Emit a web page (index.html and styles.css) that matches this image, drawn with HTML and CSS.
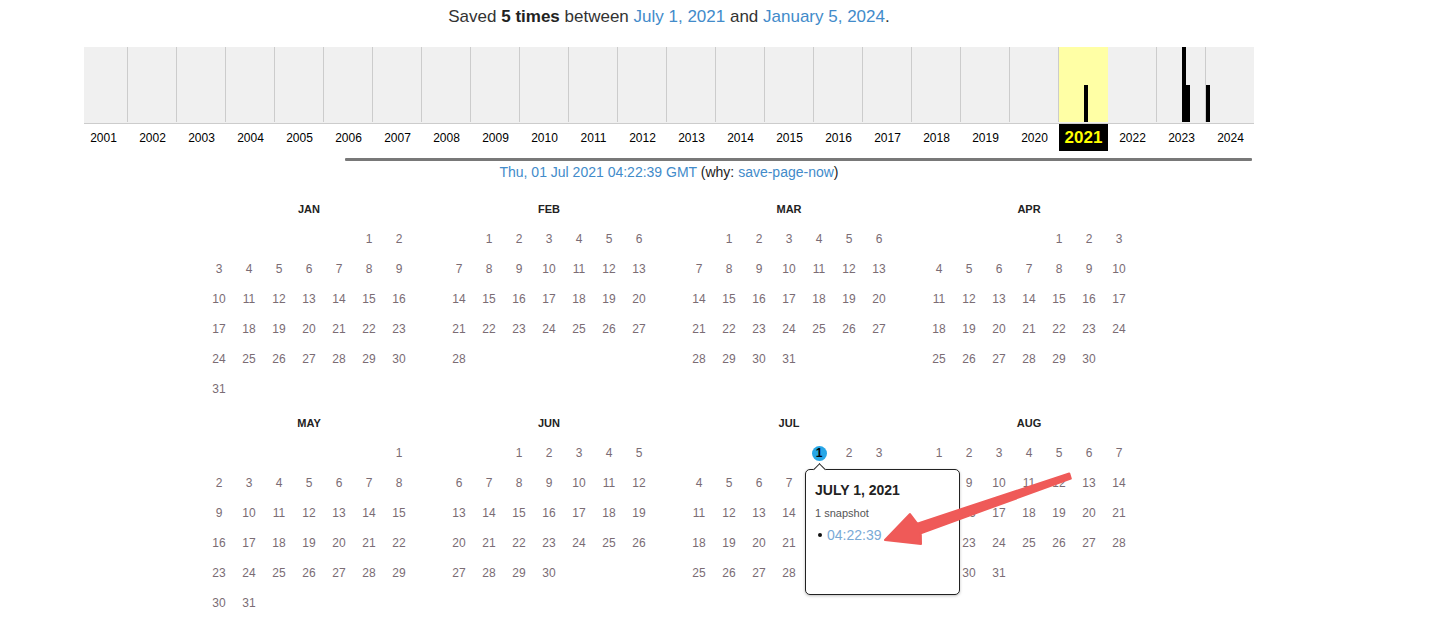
FILE: index.html
```html
<!DOCTYPE html>
<html>
<head>
<meta charset="utf-8">
<title>Wayback calendar</title>
<link rel="stylesheet" href="styles.css">
</head>
<body>
<div class="wrap">
  <div class="summary">Saved <b>5 times</b> between <a href="#">July 1, 2021</a> and <a href="#">January 5, 2024</a>.</div>

  <div class="graph">
    <div class="cols">
      <div class="col"></div><div class="col"></div><div class="col"></div><div class="col"></div>
      <div class="col"></div><div class="col"></div><div class="col"></div><div class="col"></div>
      <div class="col"></div><div class="col"></div><div class="col"></div><div class="col"></div>
      <div class="col"></div><div class="col"></div><div class="col"></div><div class="col"></div>
      <div class="col"></div><div class="col"></div><div class="col"></div><div class="col"></div>
      <div class="col current"><span class="bar" style="left:24.5px;height:37px"></span></div>
      <div class="col"></div>
      <div class="col"><span class="bar" style="left:24.5px;height:75px"></span><span class="bar" style="left:28.6px;height:37px"></span></div>
      <div class="col"><span class="bar" style="left:0px;height:37px"></span></div>
    </div>
  </div>
  <div class="labels">
    <span class="yl">2001</span><span class="yl">2002</span><span class="yl">2003</span><span class="yl">2004</span>
    <span class="yl">2005</span><span class="yl">2006</span><span class="yl">2007</span><span class="yl">2008</span>
    <span class="yl">2009</span><span class="yl">2010</span><span class="yl">2011</span><span class="yl">2012</span>
    <span class="yl">2013</span><span class="yl">2014</span><span class="yl">2015</span><span class="yl">2016</span>
    <span class="yl">2017</span><span class="yl">2018</span><span class="yl">2019</span><span class="yl">2020</span>
    <span class="yl sel">2021</span><span class="yl">2022</span><span class="yl">2023</span><span class="yl">2024</span>
  </div>
  <div class="scroller"></div>
  <div class="capture"><a href="#">Thu, 01 Jul 2021 04:22:39 GMT</a> (why: <a href="#">save-page-now</a>)</div>

  <div class="calendar">
    <div class="month">
      <div class="mtitle">JAN</div>
      <div class="days">
        <span class="day c6">1</span><span class="day">2</span><span class="day">3</span><span class="day">4</span><span class="day">5</span><span class="day">6</span><span class="day">7</span><span class="day">8</span><span class="day">9</span><span class="day">10</span><span class="day">11</span><span class="day">12</span><span class="day">13</span><span class="day">14</span><span class="day">15</span><span class="day">16</span><span class="day">17</span><span class="day">18</span><span class="day">19</span><span class="day">20</span><span class="day">21</span><span class="day">22</span><span class="day">23</span><span class="day">24</span><span class="day">25</span><span class="day">26</span><span class="day">27</span><span class="day">28</span><span class="day">29</span><span class="day">30</span><span class="day">31</span>
      </div>
    </div>
    <div class="month">
      <div class="mtitle">FEB</div>
      <div class="days">
        <span class="day c2">1</span><span class="day">2</span><span class="day">3</span><span class="day">4</span><span class="day">5</span><span class="day">6</span><span class="day">7</span><span class="day">8</span><span class="day">9</span><span class="day">10</span><span class="day">11</span><span class="day">12</span><span class="day">13</span><span class="day">14</span><span class="day">15</span><span class="day">16</span><span class="day">17</span><span class="day">18</span><span class="day">19</span><span class="day">20</span><span class="day">21</span><span class="day">22</span><span class="day">23</span><span class="day">24</span><span class="day">25</span><span class="day">26</span><span class="day">27</span><span class="day">28</span>
      </div>
    </div>
    <div class="month">
      <div class="mtitle">MAR</div>
      <div class="days">
        <span class="day c2">1</span><span class="day">2</span><span class="day">3</span><span class="day">4</span><span class="day">5</span><span class="day">6</span><span class="day">7</span><span class="day">8</span><span class="day">9</span><span class="day">10</span><span class="day">11</span><span class="day">12</span><span class="day">13</span><span class="day">14</span><span class="day">15</span><span class="day">16</span><span class="day">17</span><span class="day">18</span><span class="day">19</span><span class="day">20</span><span class="day">21</span><span class="day">22</span><span class="day">23</span><span class="day">24</span><span class="day">25</span><span class="day">26</span><span class="day">27</span><span class="day">28</span><span class="day">29</span><span class="day">30</span><span class="day">31</span>
      </div>
    </div>
    <div class="month">
      <div class="mtitle">APR</div>
      <div class="days">
        <span class="day c5">1</span><span class="day">2</span><span class="day">3</span><span class="day">4</span><span class="day">5</span><span class="day">6</span><span class="day">7</span><span class="day">8</span><span class="day">9</span><span class="day">10</span><span class="day">11</span><span class="day">12</span><span class="day">13</span><span class="day">14</span><span class="day">15</span><span class="day">16</span><span class="day">17</span><span class="day">18</span><span class="day">19</span><span class="day">20</span><span class="day">21</span><span class="day">22</span><span class="day">23</span><span class="day">24</span><span class="day">25</span><span class="day">26</span><span class="day">27</span><span class="day">28</span><span class="day">29</span><span class="day">30</span>
      </div>
    </div>
    <div class="month">
      <div class="mtitle">MAY</div>
      <div class="days">
        <span class="day c7">1</span><span class="day">2</span><span class="day">3</span><span class="day">4</span><span class="day">5</span><span class="day">6</span><span class="day">7</span><span class="day">8</span><span class="day">9</span><span class="day">10</span><span class="day">11</span><span class="day">12</span><span class="day">13</span><span class="day">14</span><span class="day">15</span><span class="day">16</span><span class="day">17</span><span class="day">18</span><span class="day">19</span><span class="day">20</span><span class="day">21</span><span class="day">22</span><span class="day">23</span><span class="day">24</span><span class="day">25</span><span class="day">26</span><span class="day">27</span><span class="day">28</span><span class="day">29</span><span class="day">30</span><span class="day">31</span>
      </div>
    </div>
    <div class="month">
      <div class="mtitle">JUN</div>
      <div class="days">
        <span class="day c3">1</span><span class="day">2</span><span class="day">3</span><span class="day">4</span><span class="day">5</span><span class="day">6</span><span class="day">7</span><span class="day">8</span><span class="day">9</span><span class="day">10</span><span class="day">11</span><span class="day">12</span><span class="day">13</span><span class="day">14</span><span class="day">15</span><span class="day">16</span><span class="day">17</span><span class="day">18</span><span class="day">19</span><span class="day">20</span><span class="day">21</span><span class="day">22</span><span class="day">23</span><span class="day">24</span><span class="day">25</span><span class="day">26</span><span class="day">27</span><span class="day">28</span><span class="day">29</span><span class="day">30</span>
      </div>
    </div>
    <div class="month">
      <div class="mtitle">JUL</div>
      <div class="days">
        <span class="day c5 snap"><span class="dot">1</span>
          <div class="popup">
            <span class="caret"></span>
            <div class="ptitle">JULY 1, 2021</div>
            <div class="pcount">1 snapshot</div>
            <div class="pitem"><span class="bullet"></span><a href="#">04:22:39</a></div>
          </div>
        </span><span class="day">2</span><span class="day">3</span><span class="day">4</span><span class="day">5</span><span class="day">6</span><span class="day">7</span><span class="day">8</span><span class="day">9</span><span class="day">10</span><span class="day">11</span><span class="day">12</span><span class="day">13</span><span class="day">14</span><span class="day">15</span><span class="day">16</span><span class="day">17</span><span class="day">18</span><span class="day">19</span><span class="day">20</span><span class="day">21</span><span class="day">22</span><span class="day">23</span><span class="day">24</span><span class="day">25</span><span class="day">26</span><span class="day">27</span><span class="day">28</span><span class="day">29</span><span class="day">30</span><span class="day">31</span>
      </div>
    </div>
    <div class="month">
      <div class="mtitle">AUG</div>
      <div class="days">
        <span class="day">1</span><span class="day">2</span><span class="day">3</span><span class="day">4</span><span class="day">5</span><span class="day">6</span><span class="day">7</span><span class="day">8</span><span class="day">9</span><span class="day">10</span><span class="day">11</span><span class="day">12</span><span class="day">13</span><span class="day">14</span><span class="day">15</span><span class="day">16</span><span class="day">17</span><span class="day">18</span><span class="day">19</span><span class="day">20</span><span class="day">21</span><span class="day">22</span><span class="day">23</span><span class="day">24</span><span class="day">25</span><span class="day">26</span><span class="day">27</span><span class="day">28</span><span class="day">29</span><span class="day">30</span><span class="day">31</span>
      </div>
    </div>
  </div>
</div>

<svg class="annot" width="1447" height="629" viewBox="0 0 1447 629">
  <polygon points="1069.2,473.4 917.2,523.6 910,514 885,540 921,544 920.8,533.2 1070.8,478.6" fill="#ef5a58" stroke="#ef5a58" stroke-width="2" stroke-linejoin="round"/>
</svg>
</body>
</html>
```
FILE: styles.css
```css
html, body {
  margin: 0;
  padding: 0;
  background: #fff;
  overflow: hidden;
}
body {
  font-family: "Liberation Sans", Arial, sans-serif;
  color: #333;
  position: relative;
  height: 629px;
}
a {
  color: #428bca;
  text-decoration: none;
}
.wrap {
  width: 1170px;
  margin-left: 84px;
}
.summary {
  margin-top: 7px;
  height: 20px;
  line-height: 20px;
  font-size: 17px;
  text-align: center;
  color: #333;
}
.summary b {
  color: #222;
}
.graph {
  margin-top: 20px;
  height: 76px;
  background: #f0f0f0;
  border-bottom: 1px solid #ccc;
  overflow: hidden;
}
.cols {
  display: flex;
  margin-left: -5px;
  height: 75px;
}
.col {
  flex: 0 0 49px;
  box-sizing: border-box;
  border-right: 1px solid #ccc;
  position: relative;
}
.col.current {
  background: #ffffa5;
  border-right-color: #ffffa5;
}
.bar {
  position: absolute;
  bottom: 0;
  width: 4px;
  background: #000;
}
.labels {
  display: flex;
  margin-left: -5px;
  height: 27px;
  overflow: hidden;
}
.yl {
  flex: 0 0 49px;
  text-align: center;
  font-size: 12px;
  line-height: 28px;
  color: #000;
}
.yl.sel {
  background: #000;
  color: #ffff00;
  font-weight: bold;
  font-size: 17px;
  line-height: 27px;
}
.scroller {
  margin-top: 7px;
  margin-left: 261px;
  width: 907px;
  height: 3px;
  background: #787878;
  border-radius: 1px;
}
.capture {
  margin-top: 2px;
  line-height: 18px;
  font-size: 14px;
  text-align: center;
  color: #222;
}
.calendar {
  margin-top: 13px;
  display: grid;
  grid-template-columns: repeat(4, 210px);
  column-gap: 30px;
  row-gap: 4px;
  justify-content: center;
}
.mtitle {
  height: 30px;
  line-height: 30px;
  text-align: center;
  font-weight: bold;
  font-size: 11px;
  color: #222;
}
.days {
  display: grid;
  grid-template-columns: repeat(7, 30px);
  grid-template-rows: repeat(6, 30px);
}
.day {
  text-align: center;
  line-height: 30px;
  font-size: 12px;
  color: #7a6c74;
}
.c2 { grid-column-start: 2; }
.c3 { grid-column-start: 3; }
.c5 { grid-column-start: 5; }
.c6 { grid-column-start: 6; }
.c7 { grid-column-start: 7; }
.snap {
  position: relative;
}
.dot {
  display: inline-block;
  width: 15px;
  height: 15px;
  line-height: 15px;
  border-radius: 50%;
  background: #27a6e6;
  color: #000;
  font-weight: bold;
  font-size: 12px;
  vertical-align: middle;
}
.popup {
  position: absolute;
  left: 1px;
  top: 31px;
  width: 155px;
  height: 126px;
  box-sizing: border-box;
  background: #fff;
  border: 1px solid #222;
  border-radius: 5px;
  box-shadow: 0 1px 3px rgba(0, 0, 0, 0.25);
  padding: 11px 0 0 9px;
  text-align: left;
  z-index: 10;
}
.caret {
  position: absolute;
  top: -5px;
  left: 9px;
  width: 8px;
  height: 8px;
  background: #fff;
  border-left: 1px solid #222;
  border-top: 1px solid #222;
  transform: rotate(45deg);
}
.ptitle {
  font-size: 14px;
  font-weight: bold;
  line-height: 18px;
  color: #222;
}
.pcount {
  margin-top: 7px;
  font-size: 11px;
  line-height: 14px;
  color: #555;
}
.pitem {
  margin-top: 6px;
  font-size: 14px;
  line-height: 18px;
  display: flex;
  align-items: center;
}
.pitem a {
  color: #7aaad6;
}
.bullet {
  display: inline-block;
  width: 4px;
  height: 4px;
  border-radius: 50%;
  background: #111;
  margin-left: 3px;
  margin-right: 5px;
}
.annot {
  position: absolute;
  left: 0;
  top: 0;
  pointer-events: none;
  z-index: 20;
}
```
